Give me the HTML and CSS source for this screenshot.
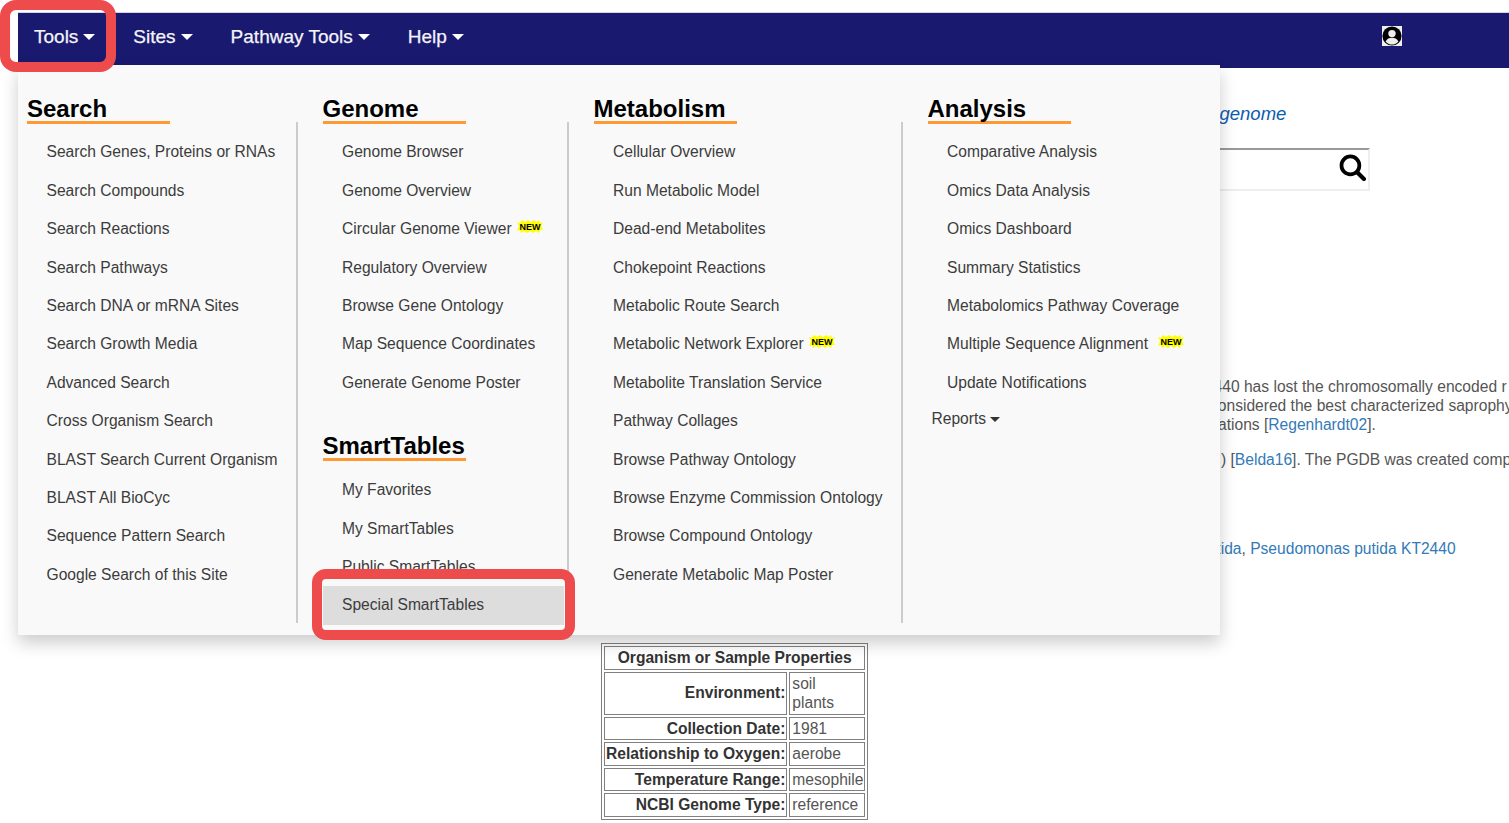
FILE: index.html
```html
<!DOCTYPE html>
<html lang="en">

<head>
  <meta charset="UTF-8" />
  <title>Pseudomonas putida KT2440 - Tools menu</title>
  <link rel="stylesheet" href="styles.css">
</head>

<body>
  <nav class="navbar">
    <a class="nav-link">Tools<span class="caret"></span></a>
    <a class="nav-link">Sites<span class="caret"></span></a>
    <a class="nav-link">Pathway Tools<span class="caret"></span></a>
    <a class="nav-link">Help<span class="caret"></span></a>
    <svg class="user-icon" viewBox="0 0 20 20">
      <rect width="20" height="20" fill="#eee" />
      <circle cx="10" cy="10" r="9.6" fill="#000" />
      <circle cx="10" cy="7.6" r="3.7" fill="#eee" />
      <path d="M3.6 15.4c1.4-2.6 3.6-3.6 6.4-3.6s5 1 6.4 3.6c-1.5 2-3.8 3.2-6.4 3.2s-4.9-1.2-6.4-3.2z" fill="#eee" />
    </svg>
  </nav>

  <main class="content">
    <a class="subtitle">Reference genome</a>
    <div class="search-box">
      <svg class="search-icon" viewBox="0 0 26 26">
        <circle cx="11" cy="11" r="8.6" fill="none" stroke="#000" stroke-width="3.6" />
        <path d="M17.5 17.5L24 24" stroke="#000" stroke-width="4" stroke-linecap="round" />
      </svg>
    </div>
    <div class="summary">
      <p class="line line-a">KT2440 has lost the chromosomally encoded r</p>
      <p class="line line-b">considered the best characterized saprophy</p>
      <p class="line line-c">mutations [<a class="ref">Regenhardt02</a>].</p>
      <p class="line line-d">) [<a class="ref">Belda16</a>]. The PGDB was created comp</p>
      <p class="line line-e"><a class="ref">putida</a>, <a class="ref">Pseudomonas putida KT2440</a></p>
    </div>

    <table class="props">
      <tr><th colspan="2">Organism or Sample Properties</th></tr>
      <tr><th class="key">Environment:</th><td>soil<br>plants</td></tr>
      <tr><th class="key">Collection Date:</th><td>1981</td></tr>
      <tr><th class="key">Relationship to Oxygen:</th><td>aerobe</td></tr>
      <tr><th class="key">Temperature Range:</th><td>mesophile</td></tr>
      <tr><th class="key">NCBI Genome Type:</th><td>reference</td></tr>
    </table>
  </main>

  <div class="mega-menu">
    <section class="col">
      <h2 class="col-title">Search</h2>
      <ul class="items">
        <li>Search Genes, Proteins or RNAs</li>
        <li>Search Compounds</li>
        <li>Search Reactions</li>
        <li>Search Pathways</li>
        <li>Search DNA or mRNA Sites</li>
        <li>Search Growth Media</li>
        <li>Advanced Search</li>
        <li>Cross Organism Search</li>
        <li>BLAST Search Current Organism</li>
        <li>BLAST All BioCyc</li>
        <li>Sequence Pattern Search</li>
        <li>Google Search of this Site</li>
      </ul>
    </section>

    <section class="col">
      <h2 class="col-title">Genome</h2>
      <ul class="items">
        <li>Genome Browser</li>
        <li>Genome Overview</li>
        <li>Circular Genome Viewer
          <svg class="new-badge" viewBox="0 0 26 13"><polygon points="0,2 3,3 5,0 8,2 11,0 14,2 17,0 20,2 22,0 23,3 26,2 24,6 26,10 23,10 22,13 19,11 16,13 13,11 10,13 7,11 4,13 3,10 0,11 2,6" fill="#ff0" /><text x="13" y="9.8" text-anchor="middle">NEW</text></svg>
        </li>
        <li>Regulatory Overview</li>
        <li>Browse Gene Ontology</li>
        <li>Map Sequence Coordinates</li>
        <li>Generate Genome Poster</li>
      </ul>
      <h2 class="col-title col-title-next">SmartTables</h2>
      <ul class="items">
        <li>My Favorites</li>
        <li>My SmartTables</li>
        <li>Public SmartTables</li>
        <li class="active">Special SmartTables</li>
      </ul>
    </section>

    <section class="col">
      <h2 class="col-title">Metabolism</h2>
      <ul class="items">
        <li>Cellular Overview</li>
        <li>Run Metabolic Model</li>
        <li>Dead-end Metabolites</li>
        <li>Chokepoint Reactions</li>
        <li>Metabolic Route Search</li>
        <li>Metabolic Network Explorer
          <svg class="new-badge" viewBox="0 0 26 13"><polygon points="0,2 3,3 5,0 8,2 11,0 14,2 17,0 20,2 22,0 23,3 26,2 24,6 26,10 23,10 22,13 19,11 16,13 13,11 10,13 7,11 4,13 3,10 0,11 2,6" fill="#ff0" /><text x="13" y="9.8" text-anchor="middle">NEW</text></svg>
        </li>
        <li>Metabolite Translation Service</li>
        <li>Pathway Collages</li>
        <li>Browse Pathway Ontology</li>
        <li>Browse Enzyme Commission Ontology</li>
        <li>Browse Compound Ontology</li>
        <li>Generate Metabolic Map Poster</li>
      </ul>
    </section>

    <section class="col col-last">
      <h2 class="col-title">Analysis</h2>
      <ul class="items">
        <li>Comparative Analysis</li>
        <li>Omics Data Analysis</li>
        <li>Omics Dashboard</li>
        <li>Summary Statistics</li>
        <li>Metabolomics Pathway Coverage</li>
        <li>Multiple Sequence Alignment
          <svg class="new-badge new-wide" viewBox="0 0 26 13"><polygon points="0,2 3,3 5,0 8,2 11,0 14,2 17,0 20,2 22,0 23,3 26,2 24,6 26,10 23,10 22,13 19,11 16,13 13,11 10,13 7,11 4,13 3,10 0,11 2,6" fill="#ff0" /><text x="13" y="9.8" text-anchor="middle">NEW</text></svg>
        </li>
        <li>Update Notifications</li>
      </ul>
      <a class="reports">Reports<span class="caret caret-small"></span></a>
    </section>
  </div>

  <!-- red callouts drawn on top of the screenshot -->
  <div class="callout callout-tools"></div>
  <div class="callout callout-special"></div>
</body>

</html>
```

FILE: styles.css
```css
html, body {
  margin: 0;
  height: 823px;
  overflow: hidden;
}
body {
  position: relative;
  background: white;
  font-family: 'Liberation Sans', Arial, sans-serif;
  font-size: 15.6px;
  color: #555;
}

.navbar {
  display: flex;
  align-items: center;
  gap: 6px;
  height: 55px;
  margin: 13px 0 0 18px;
  background: #191970;
  box-shadow: 0 -1px 0 #d5d5e2;
}
.nav-link {
  display: flex;
  align-items: center;
  padding: 0 16px;
  color: #f4f4f8;
  font-size: 19px;
  -webkit-text-stroke: 0.25px #f4f4f8;
  margin-top: -8px;
}
.caret {
  display: inline-block;
  margin-left: 5px;
  border-top: 6px solid #fff;
  border-left: 6px solid transparent;
  border-right: 6px solid transparent;
}
.caret-small {
  margin-left: 4px;
  vertical-align: 2px;
  border-top: 5px solid #333;
  border-left: 5px solid transparent;
  border-right: 5px solid transparent;
}
.user-icon {
  width: 20px;
  height: 20px;
  margin-left: auto;
  margin-right: 107px;
  margin-top: -9px;
}

.content {
  white-space: nowrap;
}
.subtitle {
  display: block;
  margin: 36px 0 0 1129px;
  font-size: 18.5px;
  font-style: italic;
  color: #0b5cad;
  line-height: 20px;
}
.search-box {
  position: relative;
  box-sizing: border-box;
  width: 300px;
  height: 43px;
  margin: 24px 0 0 1070px;
  border: 2px solid #eee;
  border-top-color: #999;
}
.search-icon {
  position: absolute;
  right: 2px;
  top: 4px;
  width: 27px;
  height: 27px;
}
.summary {
  margin-top: 186px;
  height: 266px;
}
.line {
  margin: 0;
  line-height: 19px;
}
.line-a { margin-left: 1185px; }
.line-b { margin-left: 1210px; }
.line-c { margin-left: 1192px; }
.line-d { margin-left: 1221px; margin-top: 16px; }
.line-e { margin-left: 1199px; margin-top: 70px; }
.ref {
  color: #337ab7;
}

.props {
  margin-left: 601px;
  border: 1px solid #808080;
  border-spacing: 2px;
  line-height: 19.5px;
  font-size: 15.6px;
  color: #555;
}
.props th, .props td {
  padding: 1px;
  border: 1px solid #808080;
}
.props td {
  padding-left: 2px;
}
.props th {
  color: #333;
}
.props .key {
  text-align: right;
}

.mega-menu {
  position: absolute;
  left: 18px;
  top: 65px;
  display: grid;
  grid-template-columns: 280px 271px 334px 317px;
  width: 1202px;
  height: 570px;
  background: #f9f9f9;
  box-shadow: 0 8px 16px rgba(0, 0, 0, 0.2);
}
.col {
  margin-top: 57px;
  height: 501px;
  padding-left: 24.5px;
  border-right: 2px solid #ccc;
  box-sizing: border-box;
}
.col:first-child {
  padding-left: 9px;
}
.col-last {
  border-right: none;
}
.col-title {
  width: 143px;
  height: 27px;
  margin: -28px 0 0;
  border-bottom: 3px solid #f93;
  color: #000;
  font-size: 24px;
  font-weight: bold;
  line-height: 29px;
}
.col-title-next {
  margin-top: 29px;
}
.items {
  list-style: none;
  margin: 9.4px 0 0;
  padding: 0;
}
.col-title-next + .items {
  margin-top: 10px;
}
.items li {
  height: 38.4px;
  padding-left: 19.5px;
  line-height: 38px;
  color: #3c3c3c;
  white-space: nowrap;
}
.items .active {
  background: #ddd;
  margin-right: 3px;
}
.new-badge {
  width: 26px;
  height: 13px;
  margin-left: 1px;
  vertical-align: 1px;
}
.new-wide {
  margin-left: 6px;
}
.new-badge text {
  font-family: 'Liberation Sans', Arial, sans-serif;
  font-size: 9px;
  font-weight: bold;
  fill: #000;
}
.reports {
  display: block;
  margin: 7px 0 0 4px;
  color: #3c3c3c;
  line-height: 20px;
}

.callout {
  position: absolute;
  box-sizing: border-box;
  border: 10px solid #ee4b4d;
}
.callout-tools {
  left: 0;
  top: 0;
  width: 116px;
  height: 72px;
  border-radius: 16px;
}
.callout-special {
  left: 312px;
  top: 569px;
  width: 263px;
  height: 71px;
  border-radius: 14px;
}
```
